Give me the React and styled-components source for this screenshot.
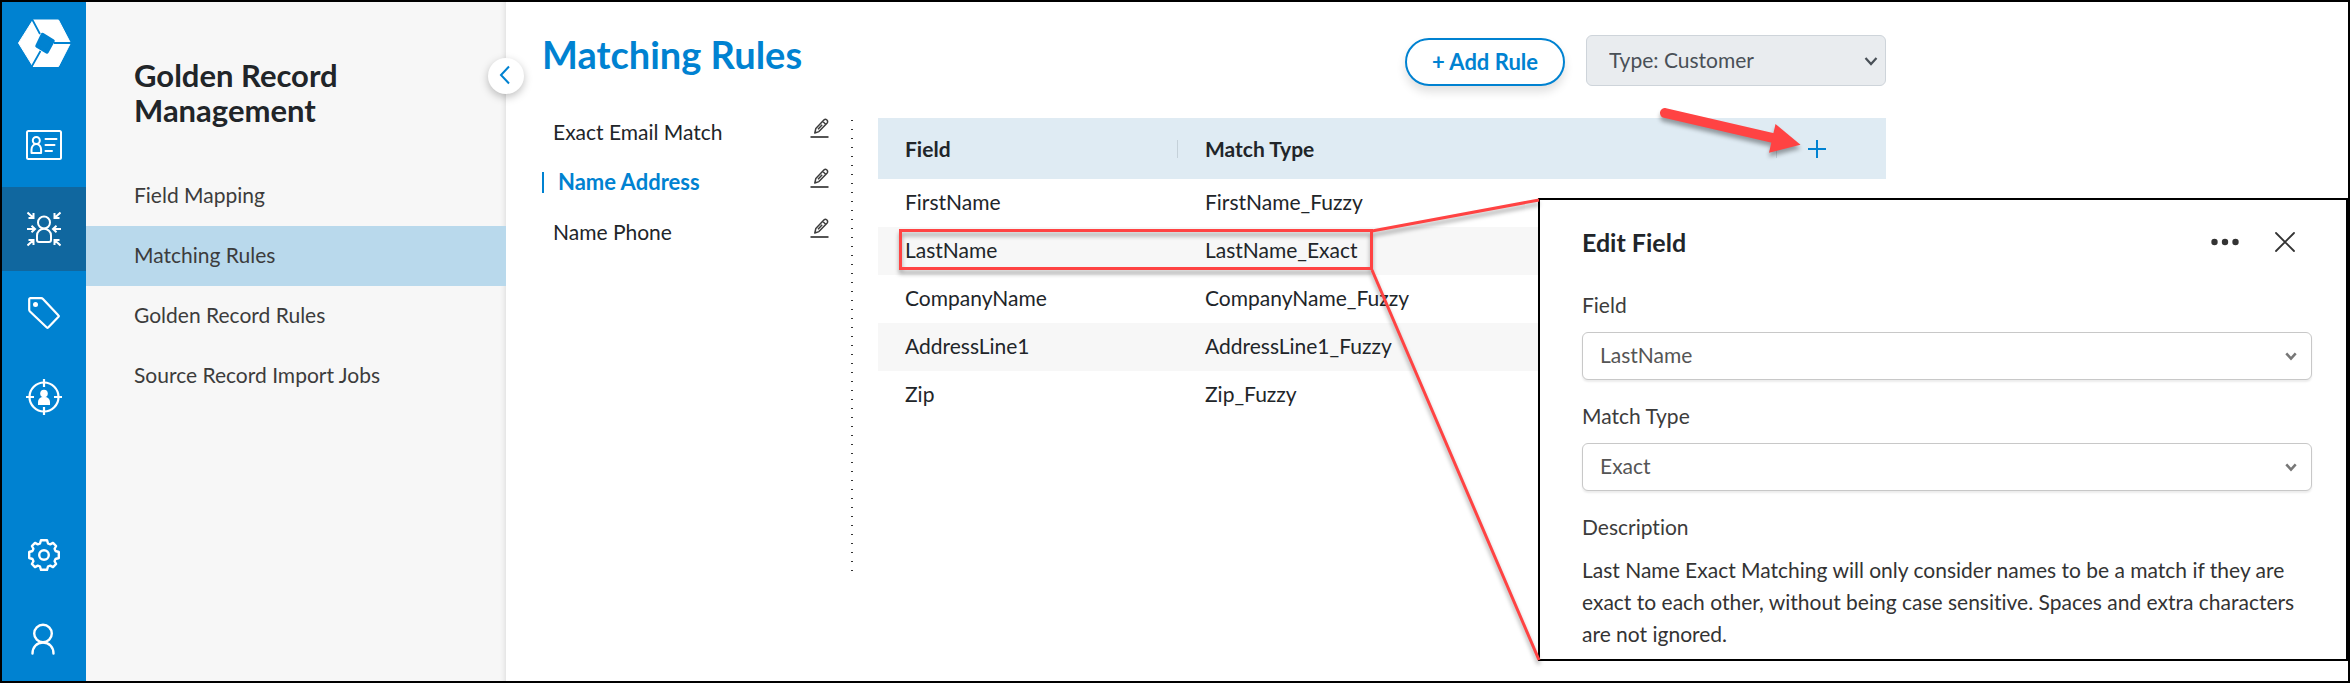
import React from 'react'
import styled, { createGlobalStyle } from 'styled-components'

const rules = ['Exact Email Match', 'Name Address', 'Name Phone']

const fields = [
  { field: 'FirstName', type: 'FirstName_Fuzzy' },
  { field: 'LastName', type: 'LastName_Exact' },
  { field: 'CompanyName', type: 'CompanyName_Fuzzy' },
  { field: 'AddressLine1', type: 'AddressLine1_Fuzzy' },
  { field: 'Zip', type: 'Zip_Fuzzy' },
]

const pages = ['Field Mapping', 'Matching Rules', 'Golden Record Rules', 'Source Record Import Jobs']

function Logo() {
  return (
    <svg width="54" height="48" viewBox="16 19 54 48" aria-hidden="true">
      <path d="M32 20h25.500L69.500 43 57.500 66.500H32L17.500 43z" fill="#fff" stroke="#fff" strokeLinejoin="round" />
      <path d="M41.500 34.500 52 41 46 52 36 46z" fill="#0082d1" stroke="#0082d1" strokeWidth="3.500" strokeLinejoin="round" />
      <path d="M31 19l8 15M53 43h18M30.500 67l9-16" stroke="#0082d1" strokeWidth="1.800" />
    </svg>
  )
}

function CardIcon() {
  return (
    <svg width="36" height="30" viewBox="0 0 36 30" fill="none" stroke="#fff" strokeWidth="2" strokeLinecap="round" aria-hidden="true">
      <rect x="1" y="1" width="34" height="28" rx="1.500" />
      <circle cx="10.300" cy="10.500" r="3.500" />
      <path d="M5.500 23v-3.500a4.800 5.500 0 0 1 9.600 0V23z" strokeLinejoin="round" />
      <path d="M19.500 9h11M19.500 15h9M19.500 21h6.500" />
    </svg>
  )
}

function MergeIcon() {
  return (
    <svg width="34" height="36" viewBox="0 0 34 36" fill="none" stroke="#fff" strokeWidth="2" aria-hidden="true">
      <circle cx="17" cy="11.500" r="6" />
      <path d="M10 29v-4.500a7 6.800 0 0 1 14 0V29q0 2-2 2H12q-2 0-2-2z" />
      <path d="M.5 1.500l5.500 5M6.500 2v5H1.500M33.500 1.500l-5.500 5M27.500 2v5h5" />
      <path d="M0 18h7M4.500 14.800 8 18l-3.500 3.200M34 18h-7M29.500 14.800 26 18l3.500 3.200" />
      <path d="M.5 34.500l5.500-5M6.500 34v-5h-5M33.500 34.500l-5.500-5M27.500 34v-5h5" />
    </svg>
  )
}

function TagIcon() {
  return (
    <svg width="32" height="32" viewBox="0 0 32 32" fill="none" stroke="#fff" strokeWidth="2.200" strokeLinejoin="round" aria-hidden="true">
      <path d="M1.200 2.500q0-1.300 1.300-1.300h10.700q1 0 1.800.8L30.500 18.500q.6.600 0 1.300L20.200 30.500q-.7.600-1.400 0L2 14.500q-.8-.8-.8-1.800z" />
      <circle cx="7.500" cy="7.500" r="2.500" fill="#fff" stroke="none" />
    </svg>
  )
}

function TargetIcon() {
  return (
    <svg width="36" height="36" viewBox="0 0 36 36" fill="none" stroke="#fff" strokeWidth="2.200" aria-hidden="true">
      <circle cx="18" cy="18" r="14.500" />
      <path d="M18 0v8M18 28v8M0 18h8M28 18h8" />
      <circle cx="18" cy="14.500" r="3.800" fill="#fff" stroke="none" />
      <path d="M12 26v-3a5 5 0 0 1 5-5h2a5 5 0 0 1 5 5v3z" fill="#fff" stroke="none" />
    </svg>
  )
}

function GearIcon() {
  return (
    <svg width="32" height="32" viewBox="0 0 32 32" fill="none" stroke="#fff" strokeWidth="2.400" strokeLinejoin="round" aria-hidden="true">
      <path d="M13 1.200h6l1 3.300q1 .6 2.200.9l2.800-1.500 3.100 3.100-1.500 2.800q.3 1.200.9 2.200l3.300 1v6l-3.300 1q-.6 1-.9 2.200l1.500 2.800-3.100 3.100-2.800-1.500q-1.200.3-2.200.9l-1 3.300h-6l-1-3.300q-1-.6-2.200-.9L7 28.100 3.900 25l1.500-2.800q-.3-1.200-.9-2.200l-3.300-1v-6l3.300-1q.6-1 .9-2.200L3.900 7 7 3.900l2.800 1.500q1.200-.3 2.200-.9z" />
      <circle cx="16" cy="16" r="4.800" />
    </svg>
  )
}

function UserIcon() {
  return (
    <svg width="26" height="32" viewBox="0 0 26 32" fill="none" stroke="#fff" strokeWidth="2.400" strokeLinecap="round" aria-hidden="true">
      <circle cx="12" cy="10.500" r="8.800" />
      <path d="M1.500 30.500c0-6 4-11 10.500-11s10.500 5 10.500 11" />
    </svg>
  )
}

function PencilIcon() {
  return (
    <svg width="19" height="20" viewBox="0 0 19 20" fill="none" stroke="#3c3c3c" strokeWidth="1.500" strokeLinejoin="round" aria-hidden="true">
      <path d="M4.800 15l1-4.400 8.300-8.800q1.300-1 2.800.2 1.300 1.500.3 2.900l-8.300 8.700zM12.800 3.500l3.200 3M8 11.300l4.200-4.500" />
      <path d="M.5 19h18" strokeWidth="2" stroke="#555" />
    </svg>
  )
}

function Chevron({ size = 14, color, weight = 2 }) {
  return (
    <svg width={size} height={size} viewBox="0 0 14 14" fill="none" stroke={color} strokeWidth={weight} aria-hidden="true">
      <path d="M1.500 4l5.500 6 5.500-6" />
    </svg>
  )
}

// red callout that ties the highlighted row to the edit panel
function Callout() {
  return (
    <Annotations width="2350" height="683" viewBox="0 0 2350 683" aria-hidden="true">
      <g fill="none" stroke="#ff4343" strokeWidth="3">
        <rect x="900.500" y="230.500" width="471" height="38" />
        <path d="M1372 231l167-31M1372 270l167 390" />
      </g>
      <path d="M1665 113l108 25" stroke="#ff4343" strokeWidth="10" strokeLinecap="round" />
      <path d="M1775.500 124l25 20.700-31.500 8z" fill="#ff4343" />
    </Annotations>
  )
}

function App() {
  return (
    <Frame>
      <GlobalStyle />
      <Rail aria-label="Main">
        <LogoLink href="#" aria-label="Home"><Logo /></LogoLink>
        <RailLink href="#" aria-label="Records"><CardIcon /></RailLink>
        <RailLink href="#" aria-label="Golden records" $active><MergeIcon /></RailLink>
        <RailLink href="#" aria-label="Tags"><TagIcon /></RailLink>
        <RailLink href="#" aria-label="Segments"><TargetIcon /></RailLink>
        <Spacer />
        <RailLink href="#" aria-label="Settings"><GearIcon /></RailLink>
        <RailLink href="#" aria-label="Account"><UserIcon /></RailLink>
      </Rail>

      <Sidebar>
        <SidebarTitle>Golden Record Management</SidebarTitle>
        <nav aria-label="Golden Record Management">
          {pages.map((page) => (
            <PageLink key={page} href="#" $active={page === 'Matching Rules'}>{page}</PageLink>
          ))}
        </nav>
        <Collapse aria-label="Collapse menu">
          <svg width="12" height="20" viewBox="0 0 12 20" fill="none" stroke="#0082d1" strokeWidth="2" aria-hidden="true">
            <path d="M10 1.500 2 10l8 8.500" />
          </svg>
        </Collapse>
      </Sidebar>

      <Main>
        <Content>
          <Header>
            <Title>Matching Rules</Title>
            <AddButton>+ Add Rule</AddButton>
            <SelectBox>
              <TypeSelect aria-label="Type" disabled defaultValue="Customer">
                <option value="Customer">Type: Customer</option>
              </TypeSelect>
              <SelectArrow $right={8}><Chevron color="#495057" weight={2.200} /></SelectArrow>
            </SelectBox>
          </Header>

          <Body>
            <RuleList>
              {rules.map((rule) => (
                <RuleItem key={rule}>
                  <RuleLink href="#" $active={rule === 'Name Address'}>{rule}</RuleLink>
                  <IconButton aria-label={`Edit ${rule}`}><PencilIcon /></IconButton>
                </RuleItem>
              ))}
            </RuleList>
            <Dots />
            <Table>
              <thead>
                <tr>
                  <Th $width="300px"><HeadCell $divider>Field</HeadCell></Th>
                  <Th><HeadCell $divider>Match Type</HeadCell></Th>
                  <Th $width="109px">
                    <HeadCell $indent="31px">
                      <IconButton aria-label="Add field">
                        <svg width="18" height="18" viewBox="0 0 18 18" stroke="#0082d1" strokeWidth="2" aria-hidden="true">
                          <path d="M9 0v18M0 9h18" />
                        </svg>
                      </IconButton>
                    </HeadCell>
                  </Th>
                </tr>
              </thead>
              <tbody>
                {fields.map((row) => (
                  <Row key={row.field}>
                    <Td>{row.field}</Td>
                    <Td>{row.type}</Td>
                    <Td />
                  </Row>
                ))}
              </tbody>
            </Table>
          </Body>
        </Content>
      </Main>

      <Panel aria-label="Edit Field">
        <PanelHeader>
          <PanelTitle>Edit Field</PanelTitle>
          <IconButton aria-label="More">
            <svg width="28" height="8" viewBox="0 0 28 8" fill="#333" aria-hidden="true">
              <circle cx="3.500" cy="4" r="3.200" />
              <circle cx="14" cy="4" r="3.200" />
              <circle cx="24.500" cy="4" r="3.200" />
            </svg>
          </IconButton>
          <IconButton aria-label="Close">
            <svg width="20" height="20" viewBox="0 0 20 20" stroke="#333" strokeWidth="1.800" strokeLinecap="round" aria-hidden="true">
              <path d="M1 1l18 18M19 1 1 19" />
            </svg>
          </IconButton>
        </PanelHeader>
        <Label htmlFor="field">Field</Label>
        <SelectBox>
          <PanelSelect id="field" defaultValue="LastName">
            {fields.map((row) => <option key={row.field}>{row.field}</option>)}
          </PanelSelect>
          <SelectArrow $right={15}><Chevron size={12} color="#777" weight={3} /></SelectArrow>
        </SelectBox>
        <Label htmlFor="matchType">Match Type</Label>
        <SelectBox>
          <PanelSelect id="matchType" defaultValue="Exact">
            <option>Exact</option>
            <option>Fuzzy</option>
          </PanelSelect>
          <SelectArrow $right={15}><Chevron size={12} color="#777" weight={3} /></SelectArrow>
        </SelectBox>
        <Label as="h3">Description</Label>
        <Description>
          Last Name Exact Matching will only consider names to be a match if they are exact to each other, without being case sensitive. Spaces and extra characters are not ignored.
        </Description>
      </Panel>
      <Callout />
    </Frame>
  )
}

export default App

const GlobalStyle = createGlobalStyle`
* {
  box-sizing: border-box;
}
body {
  margin: 0;
  background: #fff;
  color: #212529;
  font-family: Lato, 'Noto Sans', sans-serif;
  font-size: 21px;
  line-height: 32px;
  font-variant-ligatures: none;
}
button, select {
  font: inherit;
}
a {
  color: inherit;
  text-decoration: none;
}
`

const Frame = styled.div`
  position: relative;
  display: flex;
  min-height: 100vh;
  border: 2px solid #000;
  overflow: hidden;
`

const Rail = styled.nav`
  display: flex;
  flex-direction: column;
  flex: none;
  width: 84px;
  background: #0082d1;
`

const LogoLink = styled.a`
  display: flex;
  justify-content: center;
  height: 101px;
  padding-top: 17px;
`

const RailLink = styled.a`
  display: flex;
  align-items: center;
  justify-content: center;
  height: 84px;
  background: ${(p) => (p.$active ? '#10679f' : 'transparent')};
`

const Spacer = styled.div`
  flex: 1;
`

const Sidebar = styled.aside`
  position: relative;
  flex: none;
  width: 420px;
  padding-top: 56px;
  background: #f7f7f7;
  box-shadow: inset -6px 0 6px -6px rgba(0, 0, 0, 0.15);
`

const SidebarTitle = styled.h2`
  margin: 0 0 38px;
  padding: 0 120px 0 48px;
  font-size: 31px;
  line-height: 35px;
  font-weight: bold;
`

const PageLink = styled.a`
  display: block;
  padding: 13px 48px 15px;
  color: #3c3c3c;
  background: ${(p) => (p.$active ? '#b9d9ec' : 'transparent')};
`

const Collapse = styled.button`
  position: absolute;
  top: 56px;
  right: -18px;
  display: flex;
  align-items: center;
  justify-content: center;
  width: 36px;
  height: 36px;
  padding: 0 2px 2px 0;
  border: 0;
  border-radius: 50%;
  background: #fff;
  box-shadow: 0 3px 8px rgba(0, 0, 0, 0.25);
  cursor: pointer;
`

const Main = styled.main`
  flex: 1;
  min-width: 0;
  padding: 33px 36px;
`

const Content = styled.div`
  max-width: 1344px;
`

const Header = styled.header`
  display: flex;
  align-items: flex-end;
  margin-bottom: 32px;
`

const Title = styled.h1`
  flex: 1;
  margin: 0;
  align-self: flex-start;
  color: #0082d1;
  font-size: 38px;
  line-height: 38px;
  font-weight: bold;
`

const AddButton = styled.button`
  width: 160px;
  height: 48px;
  margin-right: 21px;
  padding: 0;
  border: 2px solid #0082d1;
  border-radius: 24px;
  background: #fff;
  color: #0082d1;
  font-size: 22px;
  font-weight: bold;
  box-shadow: 0 6px 10px rgba(0, 0, 0, 0.12);
  cursor: pointer;
`

const SelectBox = styled.div`
  position: relative;
`

const SelectArrow = styled.span`
  position: absolute;
  top: 0;
  right: ${(p) => p.$right}px;
  display: flex;
  align-items: center;
  height: 100%;
  pointer-events: none;
`

const Select = styled.select`
  display: block;
  appearance: none;
  border-radius: 6px;
`

const TypeSelect = styled(Select)`
  width: 300px;
  height: 51px;
  padding: 0 22px 2px;
  border: 1px solid #ced4da;
  background: #e9ecef;
  color: #495057;
  opacity: 1;
`

const PanelSelect = styled(Select)`
  width: 100%;
  height: 48px;
  padding: 0 17px 2px;
  border: 1px solid #c8c8c8;
  background: #fff;
  color: #555;
  box-shadow: 0 2px 2px rgba(0, 0, 0, 0.08);
`

const Body = styled.div`
  display: grid;
  grid-template-columns: 287px 24px 1fr;
  align-items: start;
`

const RuleList = styled.ul`
  display: grid;
  gap: 18px;
  margin: 0;
  padding: 0;
  list-style: none;
`

const RuleItem = styled.li`
  display: flex;
  align-items: flex-start;
  justify-content: space-between;
  height: 32px;
`

const RuleLink = styled.a`
  display: flex;
  align-items: center;
  padding-left: 11px;
  line-height: 28px;
  ${(p) => p.$active && `
    padding-left: 0;
    color: #0082d1;
    font-size: 22px;
    font-weight: bold;
    &:before {
      content: '';
      width: 2px;
      height: 21px;
      margin-right: 14px;
      background: #0082d1;
    }
  `}
`

const IconButton = styled.button`
  display: flex;
  padding: 0;
  border: 0;
  background: none;
  cursor: pointer;
`

const Dots = styled.div`
  height: 455px;
  margin-left: 22px;
  background: repeating-linear-gradient(transparent 0 2px, #333 2px 3px, transparent 3px 9px);
`

const Table = styled.table`
  width: calc(100% - 25px);
  margin-left: 25px;
  table-layout: fixed;
  border-collapse: collapse;
  text-align: left;
`

const Th = styled.th`
  width: ${(p) => p.$width || 'auto'};
  height: 61px;
  padding: 0;
  background: #dfebf3;
`

const HeadCell = styled.div`
  display: flex;
  align-items: center;
  height: 18px;
  padding-left: ${(p) => p.$indent || '27px'};
  border-right: ${(p) => (p.$divider ? '1px solid #c5d1d9' : '0')};
`

const Row = styled.tr`
  &:nth-child(even) {
    background: #f7f7f7;
  }
`

const Td = styled.td`
  height: 48px;
  padding: 0 0 2px 27px;
`

const Panel = styled.section`
  position: absolute;
  top: 196px;
  right: 0;
  width: 810px;
  padding: 26px 34px 9px 42px;
  border: 2px solid #000;
  background: #fff;
`

const PanelHeader = styled.header`
  display: flex;
  align-items: center;
  gap: 36px;
  padding-right: 17px;
  margin-bottom: 31px;
`

const PanelTitle = styled.h2`
  flex: 1;
  margin: 0;
  font-size: 25px;
  line-height: 32px;
  font-weight: bold;
`

const Label = styled.label`
  display: block;
  margin: 20px 0 11px;
  font-size: 21px;
  font-weight: normal;
  color: #3c3c3c;
`

const Description = styled.p`
  margin: 0;
  color: #333;
`

const Annotations = styled.svg`
  position: absolute;
  top: -2px;
  left: -2px;
  pointer-events: none;
  filter: drop-shadow(0 4px 2px rgba(0, 0, 0, 0.35));
`
